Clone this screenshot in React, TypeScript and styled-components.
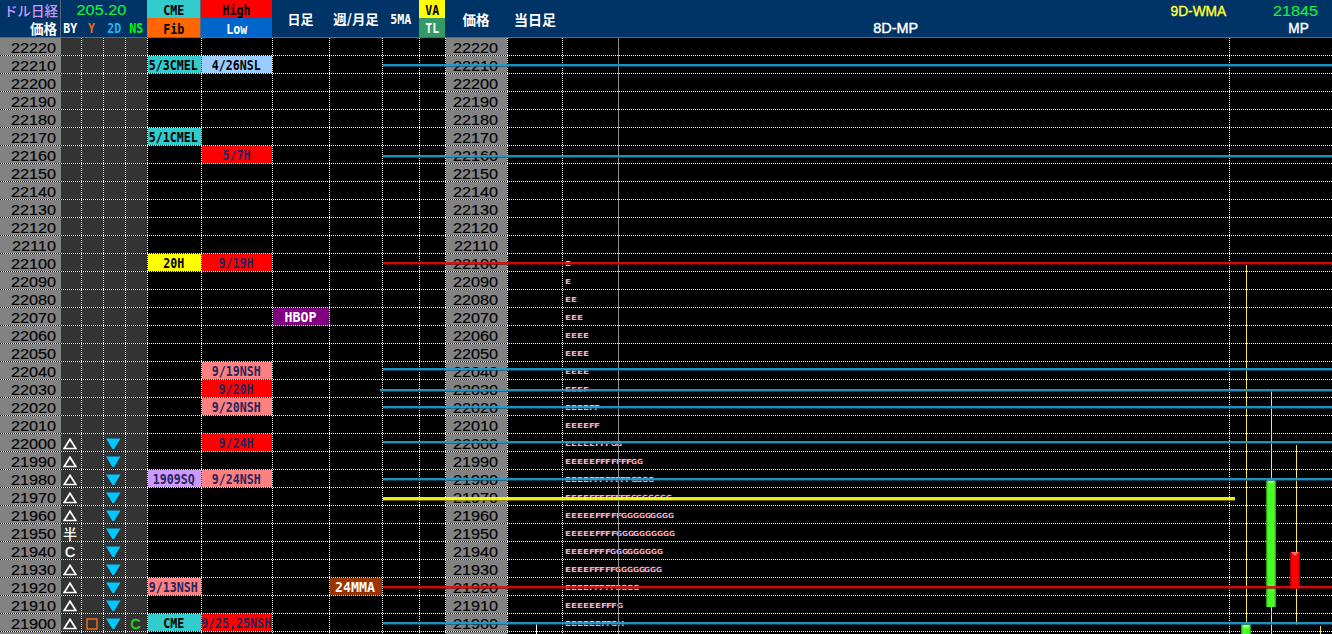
import React from "react";
import styled, { createGlobalStyle } from "styled-components";

const Global = createGlobalStyle`
  html, body { margin: 0; padding: 0; background: #000; overflow: hidden; }
  * { box-sizing: border-box; }
`;

const MONO = `"DejaVu Sans Mono", "Liberation Mono", monospace`;
const SANS = `"Liberation Sans", "Noto Sans CJK JP", sans-serif`;
const CJK = `"Noto Sans CJK JP", sans-serif`;

const COLUMNS = "61px 21px 22px 22px 22px 54px 71px 57px 53px 37px 26px 62px 55px 667px 1fr";
const HEADER_COLUMNS = "61px 86px 54px 71px 58px 53px 36px 26px 63px 55px 667px 1fr";

const Page = styled.div`
  width: 1332px;
  height: 634px;
  overflow: hidden;
  position: relative;
  background: #000;
  font-family: ${SANS};
`;

const Header = styled.header`
  display: grid;
  grid-template-columns: ${HEADER_COLUMNS};
  height: 38px;
  background: #003366;
  border-bottom: 1px solid #56687c;
`;

const HeadStack = styled.div<{ $edge?: boolean }>`
  display: grid;
  grid-template-rows: 18px 19px;
  min-width: 0;
  border-right: ${(p) => (p.$edge ? "1px solid #56687c" : "0")};
`;

const HeadSingle = styled.div`
  display: flex;
  align-items: center;
  justify-content: center;
  padding-right: 1px;
`;

const HeadCell = styled.div<{ $bg?: string; $align?: string; $pad?: string }>`
  display: flex;
  align-items: center;
  justify-content: ${(p) => p.$align ?? "center"};
  padding: ${(p) => p.$pad ?? "0"};
  background: ${(p) => p.$bg ?? "transparent"};
  min-width: 0;
`;

const SubHeads = styled.div`
  display: grid;
  grid-template-columns: 19px 24px 21px 22px;
  padding-top: 1px;
`;

const Code = styled.span<{ $color?: string; $pitch?: number; $light?: boolean }>`
  display: inline-block;
  flex: none;
  white-space: nowrap;
  font: ${(p) => (p.$light ? 400 : 700)} 12px/14px ${MONO};
  color: ${(p) => p.$color ?? "#fff"};
  transform: scale(${(p) => (p.$pitch ?? 7) / 7.224}, 1.14);
`;

const Digits = styled.span<{ $color?: string; $sx?: number; $stroke?: number }>`
  display: inline-block;
  flex: none;
  white-space: nowrap;
  font: 400 14px/14px ${SANS};
  color: ${(p) => p.$color ?? "#000"};
  -webkit-text-stroke: ${(p) => p.$stroke ?? 0.15}px currentColor;
  transform: scaleX(${(p) => p.$sx ?? 1.16});
`;

const Kanji = styled.span<{ $color?: string; $weight?: number; $size?: number; $sx?: number }>`
  display: inline-block;
  flex: none;
  white-space: nowrap;
  font: ${(p) => p.$weight ?? 700} ${(p) => p.$size ?? 13.5}px/16px ${CJK};
  color: ${(p) => p.$color ?? "#fff"};
  transform: scaleX(${(p) => p.$sx ?? 1});
`;

const Sheet = styled.main`
  display: flex;
  flex-direction: column;
`;

const Row = styled.div`
  display: grid;
  grid-template-columns: ${COLUMNS};
  height: 18px;
  flex: none;
  padding-bottom: 1px;
  background: repeating-linear-gradient(90deg, #000 0 1px, #fff 1px 2px) left bottom / 100% 1px no-repeat #000;
`;

const Cell = styled.div<{ $bg?: string; $noLine?: boolean }>`
  display: flex;
  align-items: center;
  justify-content: center;
  min-width: 0;
  height: 17px;
  padding-right: 3px;
  background:
    ${(p) => (p.$noLine ? "" : "repeating-linear-gradient(180deg, #fff 0 1px, #000 1px 2px) right top / 1px 100% no-repeat,")}
    linear-gradient(${(p) => p.$bg ?? "#000"}, ${(p) => p.$bg ?? "#000"});
`;

const Clip = styled.div`
  display: flex;
  align-items: center;
  justify-content: center;
  width: calc(100% + 2px);
  flex: none;
  padding-right: 2px;
  margin-right: -2px;
  height: 17px;
  overflow: hidden;
`;

const PriceCell = styled(Cell)<{ $first?: boolean }>`
  justify-content: ${(p) => (p.$first ? "flex-end" : "center")};
  padding: 2px ${(p) => (p.$first ? 8 : 3)}px 0 0;
`;

const ProfileCell = styled(Cell)`
  justify-content: flex-start;
  padding-left: 2px;
`;

const WIDTHS: Record<string, number> = { E: 6, F: 5.2, G: 5.9, H: 5.5 };

const Tpo = styled.span<{ $kind: string }>`
  display: inline-block;
  flex: none;
  width: ${(p) => WIDTHS[p.$kind]}px;
  height: 7px;
  margin-top: 4px;
  font: 700 7px/7px "DejaVu Sans", sans-serif;
  color: #ffa8ca;
  transform-origin: left;
  transform: scaleX(${(p) => (p.$kind === "G" ? 1.05 : 1.25)});
`;

const Icon = styled.svg`
  display: block;
  flex: none;
  margin-top: 3px;
`;

const Overlay = styled.svg`
  position: absolute;
  left: 0;
  top: 38px;
  pointer-events: none;
`;

const Up = () => (
  <Icon width="14" height="12" viewBox="0 0 14 12">
    <path d="M7 1.2L12.8 10.5H1.2Z" fill="none" stroke="#fff" strokeWidth="1.7" />
  </Icon>
);

const Down = () => (
  <Icon width="15" height="12" viewBox="0 0 15 12">
    <path d="M0 0.5H14.5L8.2 11H6.4Z" fill="#00c8ff" />
  </Icon>
);

const Box = () => (
  <Icon width="12" height="12" viewBox="0 0 12 12">
    <rect x="1" y="1" width="10" height="10" fill="none" stroke="#f26a12" strokeWidth="1.5" />
  </Icon>
);

const Mark = styled.span<{ $color?: string }>`
  font: 400 14px/14px ${SANS};
  color: ${(p) => p.$color ?? "#fff"};
  -webkit-text-stroke: 0.4px currentColor;
  padding-top: 3px;
`;

type Tag = { text: string; bg: string; fg: string; pitch?: number };
const NAVY = "#26265c";
const high = (text: string): Tag => ({ text, bg: "#ff0000", fg: NAVY });
const pink = (text: string): Tag => ({ text, bg: "#ff8080", fg: NAVY });

const fib: Record<number, Tag> = {
  22210: { text: "5/3CMEL", bg: "#33cccc", fg: "#000" },
  22170: { text: "5/1CMEL", bg: "#33cccc", fg: "#000" },
  22100: { text: "20H", bg: "#ffff00", fg: "#000" },
  21980: { text: "1909SQ", bg: "#cc99ff", fg: NAVY },
  21920: pink("9/13NSH"),
  21900: { text: "CME", bg: "#33cccc", fg: "#000" },
};

const highLow: Record<number, Tag> = {
  22210: { text: "4/26NSL", bg: "#99ccff", fg: "#000" },
  22160: high("5/7H"),
  22100: high("9/19H"),
  22040: pink("9/19NSH"),
  22030: high("9/20H"),
  22020: pink("9/20NSH"),
  22000: high("9/24H"),
  21980: pink("9/24NSH"),
  21900: high("9/25,25NSH"),
};

const daily: Record<number, Tag> = { 22070: { text: "HBOP", bg: "#800080", fg: "#fff", pitch: 8 } };
const weekly: Record<number, Tag> = { 21920: { text: "24MMA", bg: "#993300", fg: "#fff", pitch: 8 } };

const profile: Record<number, string> = {
  22100: "E",
  22090: "E",
  22080: "EE",
  22070: "EEE",
  22060: "EEEE",
  22050: "EEEE",
  22040: "EEEE",
  22030: "EEEF",
  22020: "EEEEFF",
  22010: "EEEEFF",
  22000: "EEEEEFFFGG",
  21990: "EEEEEFFFFFFFGG",
  21980: "EEEEFFFFFFFFGGGG",
  21970: "EEEEFFFFFFFFGGGGGGG",
  21960: "EEEEEFFFFFGGGGGGGGG",
  21950: "EEEEEFFFFGGGGGGGGGG",
  21940: "EEEEFFFFGGGGGGGGG",
  21930: "EEEEFFFFFGGGGGGGG",
  21920: "EEEEFFFFFGGGG",
  21910: "EEEEEEFFFG",
  21900: "EEEEEEFFGH",
};

const prices = Array.from({ length: 33 }, (_, i) => 22220 - i * 10);
const DARK = "#333333";
const GREY = "#828282";

const TagCell = ({ tag }: { tag?: Tag }) => (
  <Cell $bg={tag?.bg}>
    {tag && (
      <Clip>
        <Code $color={tag.fg} $pitch={tag.pitch}>{tag.text}</Code>
      </Clip>
    )}
  </Cell>
);

const byMark = (price: number) => {
  if (price > 22000 || price < 21900) return null;
  if (price === 21950) return <Kanji $weight={500} $size={14}>半</Kanji>;
  if (price === 21940) return <Mark>C</Mark>;
  return <Up />;
};

const PriceRow = ({ price }: { price?: number }) => {
  const at = price ?? 0;
  return (
    <Row>
      <PriceCell $first $noLine $bg={GREY}>{price && <Digits>{price}</Digits>}</PriceCell>
      <Cell $bg={DARK}>{byMark(at)}</Cell>
      <Cell $bg={DARK}>{at === 21900 && <Box />}</Cell>
      <Cell $bg={DARK}>{at <= 22000 && at >= 21900 && <Down />}</Cell>
      <Cell $bg={DARK}>{at === 21900 && <Mark $color="#1fe01f">C</Mark>}</Cell>
      <TagCell tag={fib[at]} />
      <TagCell tag={highLow[at]} />
      <TagCell tag={daily[at]} />
      <TagCell tag={weekly[at]} />
      <Cell />
      <Cell />
      <PriceCell $bg={GREY}>{price && <Digits>{price}</Digits>}</PriceCell>
      <Cell />
      <ProfileCell>
        {(profile[at] ?? "").split("").map((c, i) => <Tpo key={i} $kind={c}>{c}</Tpo>)}
      </ProfileCell>
      <Cell $noLine />
    </Row>
  );
};

type Level = { y: number; x?: number; end?: number; kind: "blue" | "red" | "yellow" };
const levels: Level[] = [
  { y: 26, kind: "blue" },
  { y: 117, kind: "blue" },
  { y: 224, kind: "red" },
  { y: 330, kind: "blue" },
  { y: 351, kind: "blue", x: 380 },
  { y: 368, kind: "blue" },
  { y: 403, kind: "blue" },
  { y: 440, kind: "blue" },
  { y: 459, kind: "yellow", end: 1235 },
  { y: 548, kind: "red" },
  { y: 584, kind: "blue" },
];
const tones = {
  blue: ["#1f9bcc", "#12587c"],
  red: ["#e00c0c", "#7e0505"],
  yellow: ["#ffff14", "#8a8a10"],
};

const Levels = () => (
  <>
    {levels.map(({ y, x = 383, end = 1332, kind }) => (
      <g key={y}>
        <rect x={x} y={y} width={end - x} height={kind === "yellow" ? 3 : 2} fill={tones[kind][0]} opacity="0.93" />
        <rect x={x} y={kind === "yellow" ? y + 3 : y + 2} width={end - x} height="1" fill={tones[kind][1]} opacity="0.7" />
      </g>
    ))}
  </>
);

const Chart = () => (
  <Overlay width="1332" height="596" viewBox="0 0 1332 596">
    <defs>
      <linearGradient id="up" x1="0" x2="1">
        <stop offset="0" stopColor="#1f8a12" />
        <stop offset="0.2" stopColor="#4cff26" />
        <stop offset="0.8" stopColor="#4cff26" />
        <stop offset="1" stopColor="#1f8a12" />
      </linearGradient>
      <linearGradient id="down" x1="0" x2="1">
        <stop offset="0" stopColor="#9a0000" />
        <stop offset="0.2" stopColor="#ff0000" />
        <stop offset="0.8" stopColor="#ff0000" />
        <stop offset="1" stopColor="#9a0000" />
      </linearGradient>
    </defs>
    <rect x="618" y="0" width="1" height="596" fill="#8c8c8c" />
    <rect x="536" y="586" width="1" height="10" fill="#fff" />
    <g fill="#f0e850">
      <rect x="1246" y="227" width="1" height="369" />
      <rect x="1271" y="353" width="1" height="243" />
      <rect x="1296" y="407" width="1" height="180" />
      <rect x="1320" y="588" width="1" height="8" />
    </g>
    <rect x="1266" y="442" width="10" height="127" fill="url(#up)" />
    <path d="M1267 442H1275L1273 445H1269Z" fill="#9dff85" />
    <rect x="1241" y="586" width="10" height="10" fill="url(#up)" />
    <path d="M1242 587H1250L1248 590H1244Z" fill="#9dff85" />
    <rect x="1290" y="514" width="10" height="37" fill="url(#down)" />
    <path d="M1291 514H1299L1295 518Z" fill="#ff6a6a" />
    <Levels />
  </Overlay>
);

const App = () => (
  <Page>
    <Global />
    <Header>
      <HeadStack $edge>
        <HeadCell $align="flex-end" $pad="1px 2px 0 0"><Kanji $color="#cc99ff" $weight={500}>ドル日経</Kanji></HeadCell>
        <HeadCell $align="flex-end" $pad="0 3px 0 0"><Kanji>価格</Kanji></HeadCell>
      </HeadStack>
      <HeadStack>
        <HeadCell $pad="2px 6px 0 0"><Digits $color="#1eea3c">205.20</Digits></HeadCell>
        <SubHeads>
          <HeadCell><Code>BY</Code></HeadCell>
          <HeadCell><Code $color="#f26a12">Y</Code></HeadCell>
          <HeadCell><Code $color="#22b4ee">2D</Code></HeadCell>
          <HeadCell><Code $color="#00ff00">NS</Code></HeadCell>
        </SubHeads>
      </HeadStack>
      <HeadStack $edge>
        <HeadCell $bg="#33cccc" $pad="2px 0 0 0"><Code $color="#000">CME</Code></HeadCell>
        <HeadCell $bg="#ff6600" $pad="2px 0 0 0"><Code $color="#000">Fib</Code></HeadCell>
      </HeadStack>
      <HeadStack>
        <HeadCell $bg="#ff0000" $pad="2px 0 0 0"><Code $color="#000">High</Code></HeadCell>
        <HeadCell $bg="#0066cc" $pad="2px 0 0 0"><Code>Low</Code></HeadCell>
      </HeadStack>
      <HeadSingle><Kanji $size={13}>日足</Kanji></HeadSingle>
      <HeadSingle><Kanji $size={13} $sx={1.03}>週/月足</Kanji></HeadSingle>
      <HeadSingle><Code>5MA</Code></HeadSingle>
      <HeadStack>
        <HeadCell $bg="#ffff00" $pad="2px 0 0 0"><Code $color="#000">VA</Code></HeadCell>
        <HeadCell $bg="#339966" $pad="1px 0 0 0"><Code>TL</Code></HeadCell>
      </HeadStack>
      <HeadSingle><Kanji>価格</Kanji></HeadSingle>
      <HeadSingle><Kanji $size={14}>当日足</Kanji></HeadSingle>
      <HeadStack>
        <HeadCell $align="flex-end" $pad="4px 3px 0 0"><Digits $color="#ffff33" $sx={0.98} $stroke={0.4}>9D-WMA</Digits></HeadCell>
        <HeadCell $pad="1px 2px 0 0"><Digits $color="#fff" $sx={1.03} $stroke={0.4}>8D-MP</Digits></HeadCell>
      </HeadStack>
      <HeadStack>
        <HeadCell $pad="4px 0 0 28px"><Digits $color="#1eea3c">21845</Digits></HeadCell>
        <HeadCell $pad="1px 0 0 34px"><Digits $color="#fff" $sx={0.97} $stroke={0.4}>MP</Digits></HeadCell>
      </HeadStack>
    </Header>
    <Sheet>
      {prices.map((price) => <PriceRow key={price} price={price} />)}
      <PriceRow />
    </Sheet>
    <Chart />
  </Page>
);

export default App;
